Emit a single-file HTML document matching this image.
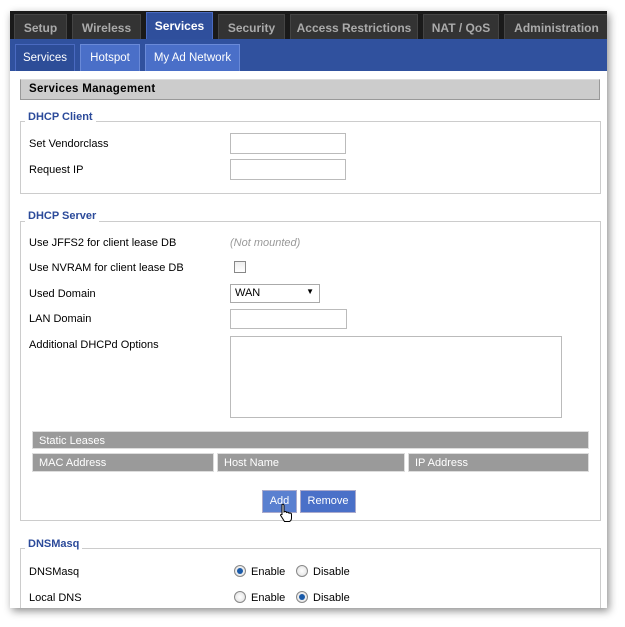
<!DOCTYPE html>
<html><head><style>
*{box-sizing:border-box;margin:0;padding:0}
body{width:625px;height:627px;background:#fff;font-family:"Liberation Sans",sans-serif;font-size:11px;color:#000;position:relative;overflow:hidden}
.a{position:absolute}
#win{left:10px;top:11px;width:597px;height:597px;background:#fff;box-shadow:2px 3px 8px rgba(0,0,0,.45);overflow:hidden}
.tab{position:absolute;top:3px;height:26px;background:#333;border:1px solid #444;border-bottom:none;color:#aaa;font-weight:bold;font-size:12px;text-align:center;line-height:26px}
.sub{position:absolute;top:33px;height:27px;background:#4a6fc8;border:1px solid #6a8ad8;border-bottom:none;color:#fff;font-size:11.5px;text-align:center;line-height:26px}
.fs{position:absolute;border:1px solid #ccc}
.lg{position:absolute;color:#2b4a9a;font-weight:bold;font-size:11px;background:#fff;padding:0 3px}
.lb{position:absolute;left:19px;font-size:11px}
.in{position:absolute;border:1px solid #bbb;background:#fff}
.gh{position:absolute;background:#9a9a9a;color:#fff;font-size:11px;line-height:18px;padding-left:6px;border:1px solid #ddd}
.rad{position:absolute;width:12px;height:12px;border-radius:50%;border:1px solid #888;background:radial-gradient(#fff,#ddd)}
.rad.on::after{content:"";position:absolute;left:2px;top:2px;width:6px;height:6px;border-radius:50%;background:#1a5aa8}
</style></head><body>
<div id="win" class="a">
<div class="a" style="left:0;top:0;width:597px;height:28px;background:#1a1a1a"></div>
<div class="tab" style="left:4px;width:53px">Setup</div>
<div class="tab" style="left:62px;width:69px">Wireless</div>
<div class="tab" style="left:136px;width:67px;top:1px;height:28px;background:#2f4f9c;border-color:#4a6ac0;color:#fff">Services</div>
<div class="tab" style="left:208px;width:67px">Security</div>
<div class="tab" style="left:280px;width:128px">Access Restrictions</div>
<div class="tab" style="left:413px;width:76px">NAT / QoS</div>
<div class="tab" style="left:494px;width:105px">Administration</div>
<div class="a" style="left:0;top:28px;width:597px;height:32px;background:#30519e"></div>
<div class="sub" style="left:5px;width:60px;background:#2d4d98;border-color:#4a6ac0">Services</div>
<div class="sub" style="left:70px;width:60px">Hotspot</div>
<div class="sub" style="left:135px;width:95px">My Ad Network</div>
<div class="a" style="left:10px;top:68px;width:580px;height:21px;background:#ccc;border:1px solid #999;border-top-color:#ddd;font-weight:bold;font-size:11.5px;line-height:19px;padding-left:8px;letter-spacing:.3px">Services Management</div>

<div class="fs" style="left:10px;top:110px;width:581px;height:73px"></div>
<div class="lg" style="left:15px;top:100px">DHCP Client</div>
<div class="lb" style="top:127px">Set Vendorclass</div>
<div class="in" style="left:220px;top:122px;width:116px;height:21px"></div>
<div class="lb" style="top:153px">Request IP</div>
<div class="in" style="left:220px;top:148px;width:116px;height:21px"></div>

<div class="fs" style="left:10px;top:210px;width:581px;height:300px"></div>
<div class="lg" style="left:15px;top:199px">DHCP Server</div>
<div class="lb" style="top:226px">Use JFFS2 for client lease DB</div>
<div class="a" style="left:220px;top:226px;color:#999;font-style:italic">(Not mounted)</div>
<div class="lb" style="top:251px">Use NVRAM for client lease DB</div>
<div class="in" style="left:224px;top:250px;width:12px;height:12px;border-color:#888;background:linear-gradient(#eee,#fff)"></div>
<div class="lb" style="top:277px">Used Domain</div>
<div class="in" style="left:220px;top:273px;width:90px;height:19px;padding:2px 4px;border-color:#aaa">WAN<span style="position:absolute;right:5px;top:2px;font-size:8px">▼</span></div>
<div class="lb" style="top:302px">LAN Domain</div>
<div class="in" style="left:220px;top:298px;width:117px;height:20px"></div>
<div class="lb" style="top:328px">Additional DHCPd Options</div>
<div class="in" style="left:220px;top:325px;width:332px;height:82px"></div>
<div class="gh" style="left:22px;top:420px;width:557px;height:18px">Static Leases</div>
<div class="gh" style="left:22px;top:442px;width:182px;height:19px">MAC Address</div>
<div class="gh" style="left:207px;top:442px;width:188px;height:19px">Host Name</div>
<div class="gh" style="left:398px;top:442px;width:181px;height:19px">IP Address</div>
<div class="a" style="left:252px;top:479px;width:35px;height:23px;background:#5a80d0;border:1px solid #aac;color:#fff;text-align:center;line-height:21px">Add</div>
<div class="a" style="left:290px;top:479px;width:56px;height:23px;background:#4a70c8;border:1px solid #aac;color:#fff;text-align:center;line-height:21px">Remove</div>
<svg class="a" style="left:268px;top:492px" width="16" height="20" viewBox="0 0 16 20"><path d="M4 1.5c1-.5 2 0 2 1V9l1-.5c1 0 1.5.5 1.5 1l1-.3c1 0 1.5.5 1.5 1l1-.2c1 0 1.5.5 1.5 1.5v3.5c0 2-1 3-2 3.5H6.5L3 13c-1-1 0-2 1-1.5L4 12V2.5z" fill="#fff" stroke="#000" stroke-width="1"/></svg>

<div class="fs" style="left:10px;top:537px;width:581px;height:80px"></div>
<div class="lg" style="left:15px;top:527px">DNSMasq</div>
<div class="lb" style="top:555px">DNSMasq</div>
<div class="rad on" style="left:224px;top:554px"></div><div class="a" style="left:241px;top:555px">Enable</div>
<div class="rad" style="left:286px;top:554px"></div><div class="a" style="left:303px;top:555px">Disable</div>
<div class="lb" style="top:581px">Local DNS</div>
<div class="rad" style="left:224px;top:580px"></div><div class="a" style="left:241px;top:581px">Enable</div>
<div class="rad on" style="left:286px;top:580px"></div><div class="a" style="left:303px;top:581px">Disable</div>
</div>
</body></html>
